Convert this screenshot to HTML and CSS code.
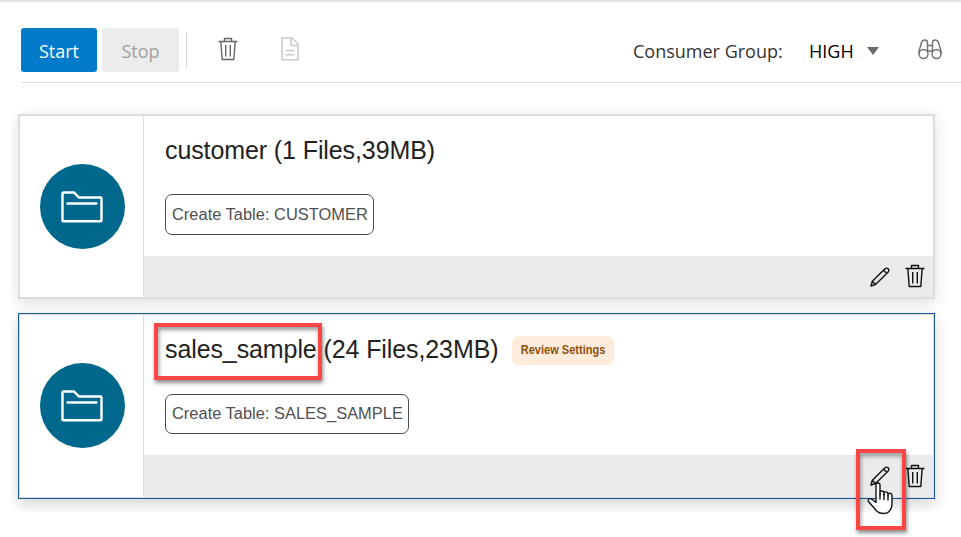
FILE: index.html
```html
<!DOCTYPE html>
<html lang="en">
<head>
<meta charset="utf-8">
<title>Data Load</title>
<link rel="stylesheet" href="styles.css">
</head>
<body>
<svg class="defs" aria-hidden="true">
  <symbol id="trash" viewBox="0 0 20 24">
    <path d="M0.5 4.5H19.5M6.5 4.5V1.5H13.5V4.5M2.8 4.5L4.2 22.5H15.8L17.2 4.5M7.7 8V19.5M12.3 8V19.5"/>
  </symbol>
  <symbol id="pencil" viewBox="0 0 20 20">
    <path d="M1 19L2.3 14.2L15 1.8Q16.7 .5 18.2 1.8Q19.5 3.3 18.2 5L5.5 17.5ZM13.6 3.2L16.8 6.4M2.3 14.2L5.5 17.5"/>
  </symbol>
  <symbol id="folder" viewBox="0 0 42 32">
    <path d="M1.5 30V2.5Q1.5 1.5 2.5 1.5H13L18 6.5H39.5Q40.5 6.5 40.5 7.5V29Q40.5 30.3 39.5 30.3H2.5Q1.5 30.3 1.5 29M6.5 12.5H35.5"/>
  </symbol>
</svg>
<main class="page">
  <header class="toolbar">
    <button class="btn btn-start">Start</button>
    <button class="btn btn-stop">Stop</button>
    <span class="separator"></span>
    <svg class="icon tool-trash"><use href="#trash"/></svg>
    <svg class="icon tool-doc" viewBox="0 0 18 24"><path d="M1 1H11L17 7V22.7H1ZM10 1V8.5H17M4.5 13.5H13.5M4.5 17.7H13.5"/></svg>
    <span class="group-label">Consumer Group:</span>
    <span class="group-value">HIGH</span>
    <span class="caret"></span>
    <svg class="icon binoculars" viewBox="0 0 24 22"><circle cx="5.5" cy="15" r="4.5"/><circle cx="18.5" cy="15" r="4.5"/><path d="M1 15V12L3.7 3Q4.3 1 6.5 1Q9.5 1 9.5 3.5V13M23 15V12L20.3 3Q19.7 1 17.5 1Q14.5 1 14.5 3.5V13M9.5 6.5H14.5M9.5 12H14.5"/></svg>
  </header>
  <section class="cards">
    <article class="card">
      <div class="card-side"><div class="disc"><svg class="folder"><use href="#folder"/></svg></div></div>
      <div class="card-main">
        <div class="card-body">
          <div class="title-row"><h2 class="title">customer (1 Files,39MB)</h2></div>
          <span class="chip">Create Table: CUSTOMER</span>
        </div>
        <footer class="card-actions">
          <svg class="icon pencil"><use href="#pencil"/></svg>
          <svg class="icon trash"><use href="#trash"/></svg>
        </footer>
      </div>
    </article>
    <article class="card selected">
      <div class="card-side"><div class="disc"><svg class="folder"><use href="#folder"/></svg></div></div>
      <div class="card-main">
        <div class="card-body">
          <div class="title-row">
            <h2 class="title">sales_sample (24 Files,23MB)</h2>
            <span class="badge"><span class="badge-text">Review Settings</span></span>
            <span class="mark mark-name"></span>
          </div>
          <span class="chip">Create Table: SALES_SAMPLE</span>
        </div>
        <footer class="card-actions">
          <svg class="icon pencil"><use href="#pencil"/></svg>
          <svg class="icon trash"><use href="#trash"/></svg>
        </footer>
      </div>
    </article>
  </section>
  <span class="mark mark-edit"></span>
  <svg class="cursor" viewBox="0 0 26 33"><path d="M9 20.5V3Q9 1 11 1Q13 1 13 3V12.5V10.5Q13 8.8 15 9Q17 9.2 17 11V13V11.3Q17.2 9.6 19 9.9Q21 10.2 21 12V14V12.3Q21.3 11 23 11.3Q25 11.7 25 13.5V22Q25 27 21.5 30Q20 31.5 16.5 31.5Q12.5 31.5 10.2 29.5L7.5 26.5L1.5 19.5Q.5 17.8 2 17Q3.2 16.2 5 17.3Z"/><path d="M13 11V17.5M17 12V18M21 13V18.5"/></svg>
</main>
</body>
</html>
```

FILE: styles.css
```css
* { box-sizing: border-box; }
body { margin: 0; background: #fff; font-family: "Liberation Sans", Arial, sans-serif; }
.defs { position: absolute; width: 0; height: 0; }
.page { position: relative; width: 961px; height: 537px; overflow: hidden; border-top: 2px solid #e4e4e4; }
.icon { display: block; flex: none; fill: none; stroke: #111; stroke-width: 1.4; stroke-linejoin: round; }

.toolbar { display: flex; align-items: center; height: 81px; margin-left: 21px; padding-top: 15px; border-bottom: 1px solid #dedede; font-family: "Open Sans", "Noto Sans", sans-serif; font-size: 18px; color: #333; }
.btn { height: 44px; margin: 1px 5px 0 0; padding: 2px 0 0; border: 0; border-radius: 3px; font: inherit; }
.btn-start { width: 76px; background: #007ac9; color: #fff; }
.btn-stop { width: 77px; background: #ececec; color: #a0a0a0; }
.separator { width: 1px; height: 36px; margin-left: 2px; background: #d9d9d9; }
.tool-trash { width: 20px; height: 24px; margin-left: 31px; margin-top: -1px; stroke: #666; }
.tool-doc { width: 18px; height: 24px; margin-left: 43px; margin-top: -1px; stroke: #ccc; stroke-width: 1.6; }
.group-label { width: 151px; margin: 2px 25px 0 auto; white-space: nowrap; }
.group-value { width: 46px; margin-top: 2px; color: #000; }
.caret { margin: 2px 39px 0 12px; border: 6px solid transparent; border-top: 8px solid #6b6b6b; border-bottom: 0; }
.binoculars { width: 24px; height: 22px; margin-right: 19px; stroke: #707070; }

.cards { display: flex; flex-direction: column; gap: 14px; width: 938px; height: 429px; margin-left: 11px; padding: 31px 14px 14px 7px; overflow: hidden; }
.card { display: flex; flex: none; height: 185px; border: 2px solid #dcdcdc; background: #fff; box-shadow: 0 4px 14px rgba(0, 0, 0, .13); }
.card.selected { height: 186px; border: 1px solid #1659a0; box-shadow: inset 0 0 0 1px #dedede, 0 6px 14px rgba(0, 0, 0, .16); padding: 1px; }
.card-side { display: flex; align-items: center; justify-content: center; width: 124px; border-right: 1px solid #dedede; }
.disc { display: flex; align-items: center; justify-content: center; width: 85px; height: 85px; margin-left: 1px; border-radius: 50%; background: #00688c; }
.selected .disc { margin-bottom: 1px; }
.folder { width: 42px; height: 32px; fill: none; stroke: #fff; stroke-width: 2.4; stroke-linecap: round; }
.card-main { display: flex; flex: 1; flex-direction: column; }
.card-body { flex: 1; padding: 20px 0 0 21px; }
.title-row { position: relative; display: flex; align-items: center; height: 30px; }
.title { margin: -2px 0 0; font-size: 25px; font-weight: 400; line-height: 30px; letter-spacing: -.1px; color: #222; white-space: nowrap; }
.badge { display: flex; align-items: center; justify-content: center; width: 102px; height: 29px; margin-left: 14px; border-radius: 7px; background: #fdecdc; color: #8f520a; font-size: 12px; font-weight: 700; white-space: nowrap; }
.badge-text { transform: scaleX(.92); }
.chip { display: inline-block; height: 41px; margin-top: 28px; padding: 0 5px 0 6px; border: 1px solid #4a4a4a; border-radius: 7px; font-size: 16.45px; line-height: 38px; color: #505050; white-space: nowrap; }
.selected .chip { height: 40px; margin-top: 29px; line-height: 36px; }
.card-actions { display: flex; align-items: center; gap: 15px; height: 41px; padding-right: 8px; justify-content: flex-end; background: #ebebed; }
.selected .card-actions { height: 42px; }
.pencil { width: 20px; height: 20px; stroke-width: 1.4; }
.card-actions .trash { width: 20px; height: 24px; margin-top: -1px; }

.mark { position: absolute; border: 4px solid #fb4646; box-shadow: 1px 3px 4px rgba(0, 0, 0, .45), inset 1px 3px 4px rgba(0, 0, 0, .4); }
.mark-name { left: -11px; top: -12px; width: 168px; height: 57px; }
.mark-edit { left: 856px; top: 447px; width: 50px; height: 81px; }
.cursor { position: absolute; left: 867px; top: 480px; width: 26px; height: 33px; fill: #fff; stroke: #111; stroke-width: 1.4; stroke-linejoin: round; }
```
